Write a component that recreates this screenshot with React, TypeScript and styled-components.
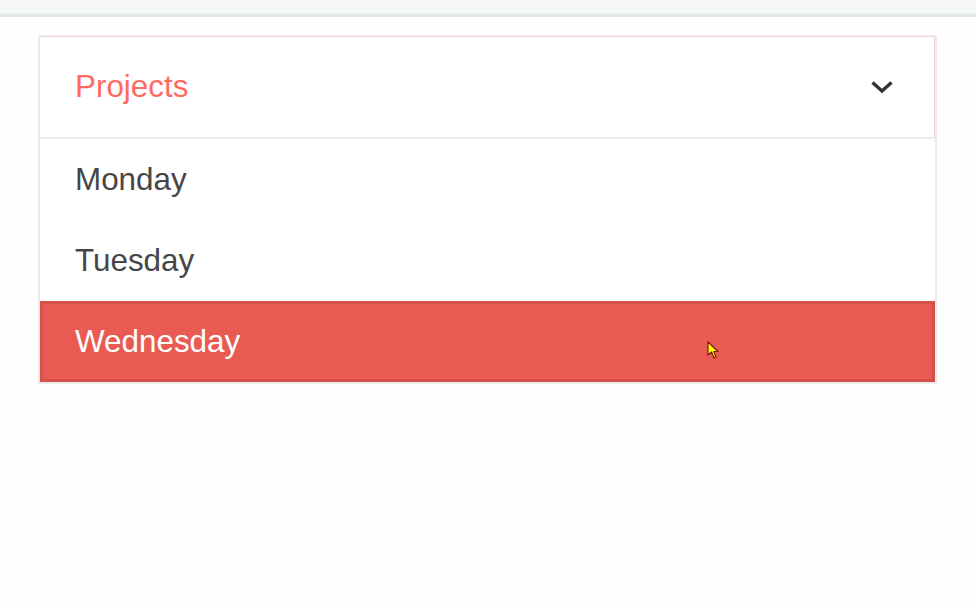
import React from "react";
import styled, { createGlobalStyle } from "styled-components";

const Global = createGlobalStyle`
  html, body { margin: 0; padding: 0; background: #fefefe; }
  body { font-family: "Liberation Sans", Arial, sans-serif; }
`;

const Page = styled.div`
  width: 976px;
  height: 604px;
  display: flex;
  flex-direction: column;
  position: relative;
  overflow: hidden;
`;

const TopBar = styled.div`
  height: 14px;
  background: #f6f7f9;
  border-bottom: 3px solid #e1e6e8;
  box-shadow: inset 0 -1px 0 #eef1f2;
`;

const Content = styled.div`
  padding: 18px 39px 0 38px;
`;

const Card = styled.div`
  border: 2px solid #ececec;
  border-top-width: 1px;
  display: flex;
  flex-direction: column;
`;

const Header = styled.div`
  height: 100px;
  display: flex;
  align-items: center;
  justify-content: space-between;
  padding: 0 40px 0 35px;
  border-top: 1px solid #f3d6d4;
  border-right: 1px solid #f3cfcd;
  border-bottom: 2px solid #ececec;
  background: #fff;
`;

const Title = styled.span`
  font-size: 31.4px;
  color: #ff6a5e;
`;

const Item = styled.div<{ $active?: boolean }>`
  height: 81px;
  display: flex;
  align-items: center;
  padding-left: 35px;
  font-size: 31.4px;
  color: ${(p) => (p.$active ? "#ffffff" : "#464646")};
  background: ${(p) => (p.$active ? "#e95b52" : "#fff")};
  box-shadow: ${(p) => (p.$active ? "inset 0 0 0 3px #d3514a" : "none")};
  position: relative;
`;

const Cursor = styled.svg`
  position: absolute;
  left: 667px;
  top: 40px;
`;

export default function App() {
  return (
    <>
      <Global />
      <Page>
        <TopBar />
        <Content>
          <Card>
            <Header>
              <Title>Projects</Title>
              <svg width="24" height="14" viewBox="0 0 24 14">
                <path d="M2.5 2.5 L12 11 L21.5 2.5" fill="none" stroke="#333" strokeWidth="3.4" />
              </svg>
            </Header>
            <Item>Monday</Item>
            <Item>Tuesday</Item>
            <Item $active>
              Wednesday
              <Cursor width="14" height="20" viewBox="0 0 14 20">
                <path d="M1 1 L1 14 L4.5 11 L7 17 L9 16 L6.7 10.5 L11 10.5 Z" fill="#ffff00" stroke="#7a1a10" strokeWidth="1.2" strokeLinejoin="round" />
              </Cursor>
            </Item>
          </Card>
        </Content>
      </Page>
    </>
  );
}
